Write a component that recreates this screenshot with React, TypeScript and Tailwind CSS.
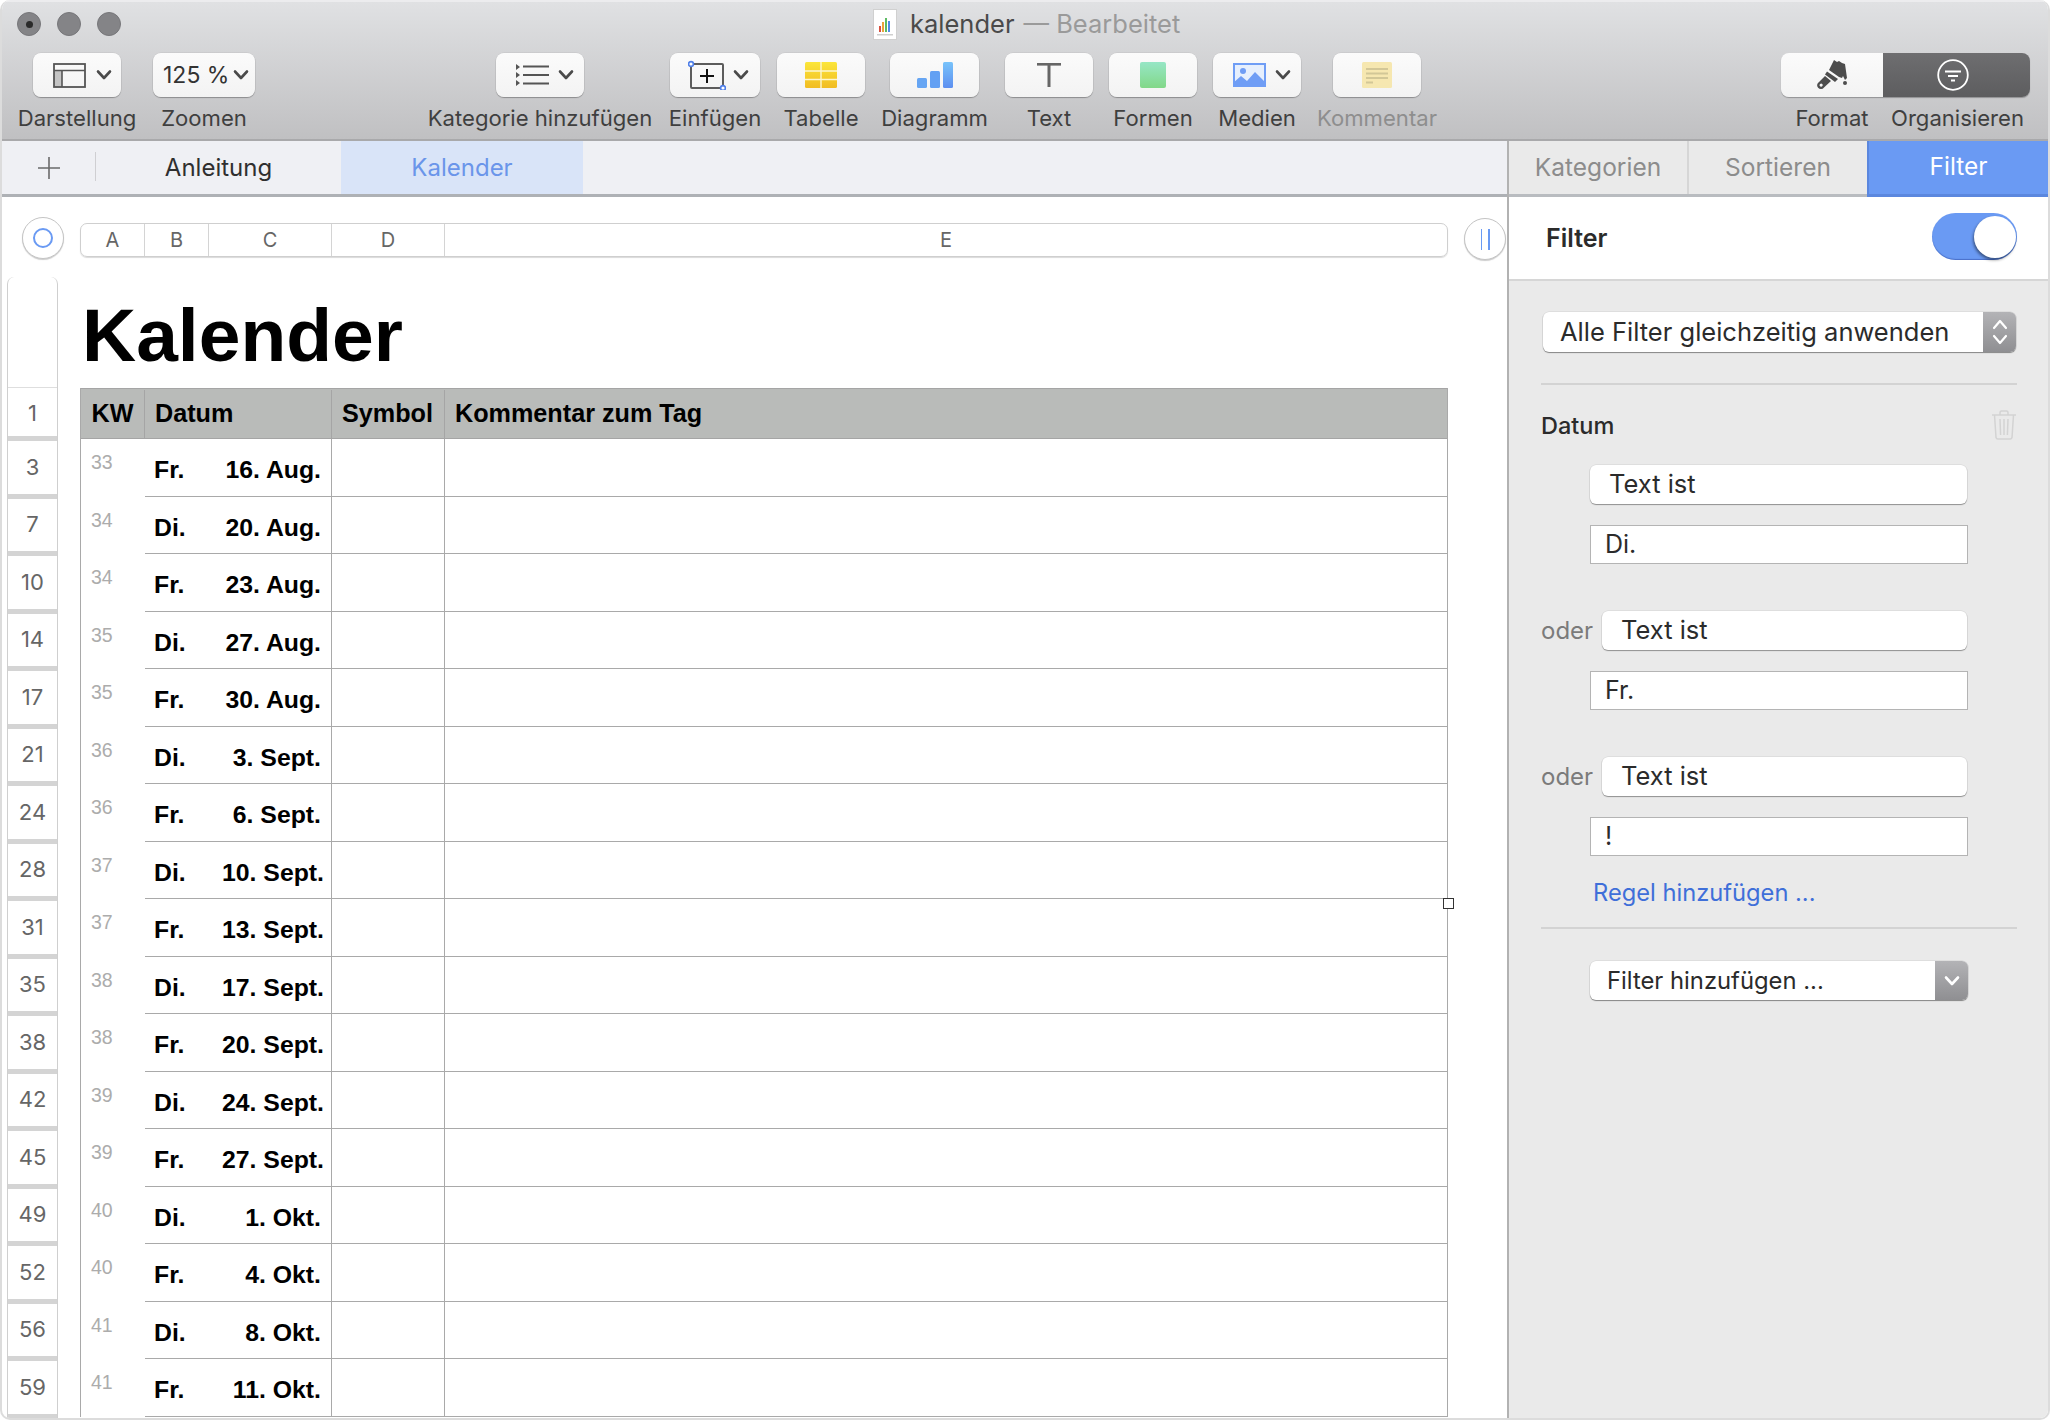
import React from "react";

const Chevron = ({ c = "#4a4a4a" }: { c?: string }) => (
  <svg width="16" height="12" viewBox="0 0 16 12" fill="none">
    <path d="M2 2.5 L8 9 L14 2.5" stroke={c} strokeWidth="2.6" strokeLinecap="round" strokeLinejoin="round" />
  </svg>
);

const IconLayout = () => (
  <svg width="33" height="25" viewBox="0 0 33 25" fill="none">
    <rect x="1" y="7" width="8" height="17" fill="#c4c4c4" />
    <rect x="1" y="1" width="31" height="23" stroke="#555" strokeWidth="1.8" />
    <path d="M1 7.5H32M9 7.5V24" stroke="#555" strokeWidth="1.6" />
  </svg>
);

const IconList = () => (
  <svg width="33" height="24" viewBox="0 0 33 24" fill="#555">
    <path d="M0 1l4 3-4 3zM0 9l4 3-4 3zM0 17l4 3-4 3z" />
    <rect x="7" y="2.5" width="26" height="2" />
    <rect x="7" y="11" width="26" height="2" />
    <rect x="7" y="19.5" width="26" height="2" />
  </svg>
);

const IconInsert = () => (
  <svg width="38" height="30" viewBox="0 0 38 30" fill="none">
    <rect x="3" y="4" width="32" height="24" rx="1" stroke="#5c5c5c" strokeWidth="2" />
    <path d="M19 9v14M12 16h14" stroke="#111" strokeWidth="2" />
    <circle cx="3" cy="4" r="2.4" fill="#fff" stroke="#4f7fe8" strokeWidth="1.6" />
    <circle cx="35" cy="28" r="2.4" fill="#fff" stroke="#4f7fe8" strokeWidth="1.6" />
  </svg>
);

const IconTable = () => (
  <svg width="32" height="26" viewBox="0 0 32 26">
    <defs>
      <linearGradient id="yt" x1="0" y1="0" x2="0" y2="1">
        <stop offset="0" stopColor="#fbe63a" />
        <stop offset="1" stopColor="#f1bc22" />
      </linearGradient>
    </defs>
    <rect width="32" height="26" rx="1.5" fill="url(#yt)" />
    <path d="M16 0v26M0 9h32M0 17.5h32" stroke="#fdf6cf" strokeWidth="1.4" />
  </svg>
);

const IconChart = () => (
  <svg width="36" height="26" viewBox="0 0 36 26">
    <defs>
      <linearGradient id="bt" x1="0" y1="0" x2="0" y2="1">
        <stop offset="0" stopColor="#78c3fa" />
        <stop offset="1" stopColor="#5d8ff0" />
      </linearGradient>
    </defs>
    <rect x="0" y="16" width="10" height="10" rx="1.5" fill="#66a5f3" />
    <rect x="13" y="9" width="10" height="17" rx="1.5" fill="#62a0f3" />
    <rect x="26" y="0" width="10" height="26" rx="1.5" fill="url(#bt)" />
  </svg>
);

const IconT = () => (
  <svg width="24" height="24" viewBox="0 0 24 24" fill="#666">
    <rect width="24" height="2.6" />
    <rect x="10.5" width="3" height="24" />
  </svg>
);

const IconShape = () => (
  <svg width="26" height="26" viewBox="0 0 26 26">
    <defs>
      <linearGradient id="gt" x1="0" y1="0" x2="0" y2="1">
        <stop offset="0" stopColor="#96e6c6" />
        <stop offset="1" stopColor="#82d888" />
      </linearGradient>
    </defs>
    <rect width="26" height="26" rx="2" fill="url(#gt)" />
  </svg>
);

const IconMedia = () => (
  <svg width="33" height="24" viewBox="0 0 33 24">
    <rect width="33" height="24" fill="#6f9df5" />
    <rect x="2" y="2" width="29" height="20" fill="#e6effd" />
    <circle cx="10" cy="8" r="3" fill="#6f9df5" />
    <path d="M0 24V20L8 13L14 18L22 9L33 20V24Z" fill="#6f9df5" />
  </svg>
);

const IconComment = () => (
  <svg width="30" height="26" viewBox="0 0 30 26">
    <rect width="30" height="26" rx="1.5" fill="#f6e6a9" />
    <path d="M4 7h22M4 11.5h22M4 16h22M4 20.5h7" stroke="#cfc28d" strokeWidth="2" />
  </svg>
);

const IconBrush = () => (
  <svg width="32" height="30" viewBox="0 0 32 30" fill="#4d4d4d">
    <path d="M13 10L18 0l3 2 2-1 3 2 3 1 1 7 1 7-2 2-2-4-1 2-3-1z" />
    <path d="M11 11.500l11 7.500-3 3-10-7.500z" />
    <path d="M9 16l6 5-7 6.500a3.800 3.800 0 1 1-5-5.500zM4.200 24a1.500 1.500 0 1 0 2.200 2 1.500 1.500 0 0 0-2.200-2z" fillRule="evenodd" />
    <circle cx="29" cy="23" r="2" />
  </svg>
);

const IconFilter = () => (
  <svg width="32" height="32" viewBox="0 0 32 32" fill="none" stroke="#fff">
    <circle cx="16" cy="16" r="14.800" strokeWidth="1.800" />
    <path d="M8 12.500h16M11 17h10M14 21.500h4" strokeWidth="2" />
  </svg>
);

const IconDoc = () => (
  <svg width="24" height="31" viewBox="0 0 24 31">
    <rect x="0.500" y="0.500" width="23" height="30" fill="#fff" stroke="#d0d0d0" />
    <rect x="6" y="17" width="2" height="6" fill="#d8503f" />
    <rect x="9" y="13" width="2" height="10" fill="#e8a33a" />
    <rect x="12" y="9" width="2" height="14" fill="#5dbb63" />
    <rect x="15" y="12" width="2" height="11" fill="#4f8ce8" />
    <rect x="4" y="25" width="16" height="1.500" fill="#cfcfcf" />
  </svg>
);

const IconTrash = () => (
  <svg width="26" height="30" viewBox="0 0 26 30" fill="none" stroke="#d3d3d3" strokeWidth="1.500">
    <path d="M1 5h24M9 5V2.500A1.500 1.500 0 0 1 10.500 1h5A1.500 1.500 0 0 1 17 2.500V5" />
    <path d="M3.500 5l1.500 22.500a2 2 0 0 0 2 1.500h12a2 2 0 0 0 2-1.500L22.500 5" />
    <path d="M9 9l.6 16M13 9v16M17 9l-.6 16" />
  </svg>
);

const btn =
  "flex items-center h-[44px] rounded-[8px] bg-gradient-to-b from-[#fbfbfb] to-[#f3f3f3] shadow-[0_1px_1px_rgba(0,0,0,0.28),0_0_0_0.5px_rgba(0,0,0,0.08)]";
const label = "mt-[8px] text-[22.100px] leading-[26px] text-[#3f3f3f] whitespace-nowrap";

const Tool = ({
  className,
  inner = "justify-center",
  text,
  dim,
  children,
}: {
  className: string;
  inner?: string;
  text: string;
  dim?: boolean;
  children: React.ReactNode;
}) => (
  <div className={"flex flex-col items-center " + className}>
    <div className={btn + " w-full " + inner}>{children}</div>
    <div className={dim ? label + " !text-[#8e8e8e]" : label}>{text}</div>
  </div>
);

const rowNums = [3, 7, 10, 14, 17, 21, 24, 28, 31, 35, 38, 42, 45, 49, 52, 56, 59];
const rows: [string, string, string][] = [
  ["33", "Fr.", "16. Aug."],
  ["34", "Di.", "20. Aug."],
  ["34", "Fr.", "23. Aug."],
  ["35", "Di.", "27. Aug."],
  ["35", "Fr.", "30. Aug."],
  ["36", "Di.", "3. Sept."],
  ["36", "Fr.", "6. Sept."],
  ["37", "Di.", "10. Sept."],
  ["37", "Fr.", "13. Sept."],
  ["38", "Di.", "17. Sept."],
  ["38", "Fr.", "20. Sept."],
  ["39", "Di.", "24. Sept."],
  ["39", "Fr.", "27. Sept."],
  ["40", "Di.", "1. Okt."],
  ["40", "Fr.", "4. Okt."],
  ["41", "Di.", "8. Okt."],
  ["41", "Fr.", "11. Okt."],
];

const Popup = ({ className, text }: { className: string; text: string }) => (
  <div
    className={
      "h-[39px] flex items-center bg-white rounded-[6px] text-[25.500px] text-[#2b2b2b] shadow-[0_1px_1px_rgba(0,0,0,0.35),0_0_0_0.5px_rgba(0,0,0,0.1)] " +
      className
    }
  >
    {text}
  </div>
);

const Field = ({ text }: { text: string }) => (
  <div className="ml-[49px] mt-[21px] w-[378px] h-[39px] pl-[14px] flex items-center bg-white border border-[#b4b4b4] text-[25px] text-[#2b2b2b]">
    {text}
  </div>
);

const Rule = ({ text }: { text: string }) => (
  <div className="mt-[47px]">
    <div className="flex items-center">
      <div className="w-[61px] text-[24px] text-[#7b7b7b]">oder</div>
      <Popup className="w-[365px] pl-[19px]" text="Text ist" />
    </div>
    <Field text={text} />
  </div>
);

export default function App() {
  return (
    <div className="w-[2050px] h-[1420px] bg-white overflow-hidden font-['Inter',sans-serif]">
      <div className="w-[2050px] h-[1420px] rounded-[10px] overflow-hidden border-x-2 border-b-2 border-[#dcdcdc] flex flex-col relative">
        {/* Toolbar */}
        <div className="h-[141px] shrink-0 bg-gradient-to-b from-[#e0e1e3] to-[#c0c0c2] border-b-2 border-[#a9a9ab] border-t-2 border-t-[#ececee]">
          <div className="h-[51px] pb-[7px] flex items-center pl-[15px]">
            <div className="flex gap-[16px]">
              <div className="w-[24px] h-[24px] rounded-full bg-[#848487] border border-[#77777a] flex items-center justify-center">
                <div className="w-[7px] h-[7px] rounded-full bg-[#2a2a2a]" />
              </div>
              <div className="w-[24px] h-[24px] rounded-full bg-[#848487] border border-[#77777a]" />
              <div className="w-[24px] h-[24px] rounded-full bg-[#848487] border border-[#77777a]" />
            </div>
            <div className="ml-[752px] flex items-center">
              <IconDoc />
              <span className="ml-[13px] text-[25.500px] text-[#4a4a4a]">kalender</span>
              <span className="ml-[9px] text-[25.500px] text-[#9a9a9a]">— Bearbeitet</span>
            </div>
          </div>
          <div className="flex items-start pl-[31px]">
            <Tool className="w-[88px]" inner="pl-[20px]" text="Darstellung">
              <IconLayout />
              <span className="ml-[10px]"><Chevron /></span>
            </Tool>
            <Tool className="w-[102px] ml-[32px]" inner="pl-[10px]" text="Zoomen">
              <span className="text-[23px] text-[#333] whitespace-nowrap">125 %</span>
              <span className="ml-[4px]"><Chevron /></span>
            </Tool>
            <Tool className="w-[88px] ml-[241px]" inner="pl-[20px]" text="Kategorie hinzufügen">
              <IconList />
              <span className="ml-[9px]"><Chevron /></span>
            </Tool>
            <Tool className="w-[90px] ml-[86px]" inner="pl-[18px]" text="Einfügen">
              <IconInsert />
              <span className="ml-[7px]"><Chevron /></span>
            </Tool>
            <Tool className="w-[88px] ml-[17px]" text="Tabelle"><IconTable /></Tool>
            <Tool className="w-[89px] ml-[25px]" text="Diagramm"><IconChart /></Tool>
            <Tool className="w-[88px] ml-[26px]" text="Text"><IconT /></Tool>
            <Tool className="w-[88px] ml-[16px]" text="Formen"><IconShape /></Tool>
            <Tool className="w-[88px] ml-[16px]" inner="pl-[20px]" text="Medien">
              <IconMedia />
              <span className="ml-[9px]"><Chevron /></span>
            </Tool>
            <Tool className="w-[88px] ml-[32px]" text="Kommentar" dim>
              <span className="opacity-90"><IconComment /></span>
            </Tool>
            <div className="ml-[360px] w-[249px]">
              <div className="flex h-[44px] rounded-[8px] overflow-hidden shadow-[0_1px_1px_rgba(0,0,0,0.28)]">
                <div className="w-[102px] flex items-center justify-center bg-gradient-to-b from-[#fbfbfb] to-[#f3f3f3]">
                  <IconBrush />
                </div>
                <div className="flex-1 flex items-center justify-center pr-[7px] bg-gradient-to-b from-[#6e6e70] to-[#5d5d5f]">
                  <IconFilter />
                </div>
              </div>
              <div className="flex">
                <div className={label + " w-[102px] text-center"}>Format</div>
                <div className={label + " flex-1 text-center pl-[2px]"}>Organisieren</div>
              </div>
            </div>
          </div>
        </div>

        {/* Body */}
        <div className="flex flex-1 min-h-0">
          {/* Left */}
          <div className="w-[1505px] shrink-0 flex flex-col relative">
            <div className="h-[56px] shrink-0 bg-[#eff0f4] border-b-[3px] border-[#aeb1b5] flex items-stretch">
              <div className="w-[93px] flex items-center justify-center text-[#666]">
                <svg width="24" height="24" viewBox="0 0 24 24" stroke="#6a6a6a" strokeWidth="1.600">
                  <path d="M12 1v22M1 12h22" />
                </svg>
              </div>
              <div className="w-[1px] h-[29px] self-center bg-[#cfcfd2] -mt-[2px]" />
              <div className="w-[245px] flex items-center justify-center text-[24px] text-[#2f2f2f]">Anleitung</div>
              <div className="w-[242px] flex items-center justify-center text-[24px] text-[#6a95ea] bg-[#d9e4f8]">Kalender</div>
            </div>

            {/* column header */}
            <div className="h-[80px] shrink-0 flex pt-[26px] pl-[20px]">
              <div className="w-[42px] h-[42px] -mt-[6px] rounded-full bg-white border border-[#c4c4c4] shadow-[0_1px_1px_rgba(0,0,0,0.2)] flex items-center justify-center">
                <div className="w-[20px] h-[20px] rounded-full border-2 border-[#6a9af3]" />
              </div>
              <div className="ml-[16px] w-[1368px] h-[34px] rounded-[7px] border border-[#cfcfcf] shadow-[0_1px_1px_rgba(0,0,0,0.15)] flex text-[20px] text-[#666]">
                <div className="w-[64px] flex items-center justify-center border-r border-[#d4d4d4]">A</div>
                <div className="w-[64px] flex items-center justify-center border-r border-[#d4d4d4]">B</div>
                <div className="w-[123px] flex items-center justify-center border-r border-[#d4d4d4]">C</div>
                <div className="w-[113px] flex items-center justify-center border-r border-[#d4d4d4]">D</div>
                <div className="flex-1 flex items-center justify-center">E</div>
              </div>
              <div className="ml-[16px] w-[42px] h-[42px] -mt-[5px] rounded-full bg-white border border-[#c4c4c4] shadow-[0_1px_1px_rgba(0,0,0,0.2)] flex items-center justify-center gap-[6px]">
                <div className="w-[1.500px] h-[21px] bg-[#6a9af3]" />
                <div className="w-[1.500px] h-[21px] bg-[#6a9af3]" />
              </div>
            </div>

            {/* sheet */}
            <div className="flex flex-1 min-h-0 overflow-hidden pl-[5px]">
              <div className="w-[51px] shrink-0 border-x border-[#cfcfcf] rounded-t-[7px] text-[22px] text-[#666]">
                <div className="h-[111px] border-b border-[#dedede]" />
                <div className="h-[53px] pt-[2px] border-b-[5px] border-[#d4d4d4] flex items-center justify-center">1</div>
                {rowNums.map((n) => (
                  <div key={n} className="h-[57.500px] border-b-[5px] border-[#d4d4d4] flex items-center justify-center">
                    {n}
                  </div>
                ))}
              </div>

              <div className="ml-[22px] w-[1368px] font-['Liberation_Sans',Arial,sans-serif] text-black">
                <div className="h-[111px] pl-[2px] flex items-center pt-[6px] text-[75px] leading-none font-bold">Kalender</div>
                <div className="border-l border-r border-[#a9a9a9]">
                  <div className="h-[51px] pt-[1px] flex bg-[#b9bbb9] border-y border-[#a5a5a5] text-[25.200px] font-bold">
                    <div className="w-[64px] flex items-center justify-center border-r border-[#a5a5a5]">KW</div>
                    <div className="w-[187px] flex items-center pl-[10px] border-r border-[#a5a5a5]">Datum</div>
                    <div className="w-[113px] flex items-center pl-[10px] border-r border-[#a5a5a5]">Symbol</div>
                    <div className="flex-1 flex items-center pl-[10px]">Kommentar zum Tag</div>
                  </div>
                  {rows.map(([kw, day, date], i) => (
                    <div key={i} className="h-[57.500px] flex">
                      <div className="w-[64px] pl-[10px] pt-[10px] text-[19.500px] leading-[26px] text-[#acacac]">{kw}</div>
                      <div className="flex-1 flex border-b border-[#a9a9a9]">
                        <div
                          className={
                            date.length >= 9
                              ? "w-[187px] flex items-center justify-between pl-[9px] pr-[7px] pt-[5px] text-[24.800px] font-bold border-r border-[#a9a9a9]"
                              : "w-[187px] flex items-center justify-between pl-[9px] pr-[10px] pt-[5px] text-[24.800px] font-bold border-r border-[#a9a9a9]"
                          }
                        >
                          <span>{day}</span>
                          <span>{date}</span>
                        </div>
                        <div className="w-[113px] border-r border-[#a9a9a9]" />
                        <div className="flex-1" />
                      </div>
                    </div>
                  ))}
                </div>
              </div>
            </div>

            {/* selection handle */}
            <div className="absolute left-[1441px] top-[757px] w-[11px] h-[11px] bg-white border border-[#333]" />
          </div>

          {/* Right panel */}
          <div className="flex-1 min-w-0 bg-[#eaeaea] border-l-[2px] border-[#b2b2b2] flex flex-col">
            <div className="h-[56px] shrink-0 flex border-b-[3px] border-[#b9bcc0] text-[24.500px]">
              <div className="w-[180px] flex items-center justify-center text-[#8c8c8c] border-r-2 border-[#d6d6d6]">Kategorien</div>
              <div className="w-[178px] flex items-center justify-center text-[#8c8c8c]">Sortieren</div>
              <div className="flex-1 -mb-[3px] pb-[3px] flex items-center justify-center text-white bg-[#6a9af3] border-l-2 border-b-[3px] border-[#5b87de]">Filter</div>
            </div>
            <div className="h-[84px] shrink-0 bg-white border-b-2 border-[#d6d6d6] flex items-center justify-between pl-[37px] pr-[31px]">
              <span className="text-[25px] pt-[1px] font-semibold text-[#2b2b2b]">Filter</span>
              <div className="-mt-[3px] w-[85px] h-[47px] rounded-full bg-[#6a9af3] flex items-center justify-end pr-[1px] shadow-[inset_0_-1px_1px_rgba(40,70,160,0.5)]">
                <div className="w-[42px] h-[42px] rounded-full bg-white shadow-[-1px_2px_3px_rgba(0,0,0,0.45)]" />
              </div>
            </div>

            <div className="pl-[32px] pr-[30px]">
              {/* select */}
              <div className="mt-[31px] ml-[2px] w-[473px] h-[40px] flex rounded-[6px] overflow-hidden bg-white shadow-[0_1px_1px_rgba(0,0,0,0.4),0_0_0_0.5px_rgba(0,0,0,0.1)]">
                <div className="flex-1 pl-[17px] flex items-center text-[25.500px] text-[#2b2b2b] whitespace-nowrap">Alle Filter gleichzeitig anwenden</div>
                <div className="w-[33px] flex items-center justify-center bg-gradient-to-b from-[#b3b3b6] to-[#8f8f92]">
                  <svg width="16" height="28" viewBox="0 0 16 28" fill="none" stroke="#fff" strokeWidth="2.200" strokeLinecap="round" strokeLinejoin="round">
                    <path d="M2 10L8 3L14 10M2 18L8 25L14 18" />
                  </svg>
                </div>
              </div>
              <div className="mt-[31px] h-[2px] w-[476px] bg-[#d3d3d3]" />

              <div className="mt-[27px] flex items-center justify-between w-[476px]">
                <span className="text-[23.500px] leading-[28px] font-medium text-[#2b2b2b]">Datum</span>
                <span className="-mt-[2px]"><IconTrash /></span>
              </div>

              <div className="mt-[25px] ml-[49px] w-[377px]">
                <Popup className="w-full pl-[19px]" text="Text ist" />
              </div>
              <Field text="Di." />
              <Rule text="Fr." />
              <Rule text="!" />

              <div className="mt-[21px] ml-[52px] text-[23.700px] leading-[32px] text-[#3f6fd9]">Regel hinzufügen ...</div>
              <div className="mt-[18px] h-[2px] w-[476px] bg-[#d3d3d3]" />

              <div className="mt-[32px] ml-[49px] w-[378px] h-[39px] flex rounded-[6px] overflow-hidden bg-white shadow-[0_1px_1px_rgba(0,0,0,0.4),0_0_0_0.5px_rgba(0,0,0,0.1)]">
                <div className="flex-1 pl-[17px] flex items-center text-[23.800px] text-[#2b2b2b] whitespace-nowrap">Filter hinzufügen ...</div>
                <div className="w-[33px] flex items-center justify-center bg-gradient-to-b from-[#b3b3b6] to-[#8f8f92]">
                  <Chevron c="#fff" />
                </div>
              </div>
            </div>
          </div>
        </div>
      </div>
    </div>
  );
}
